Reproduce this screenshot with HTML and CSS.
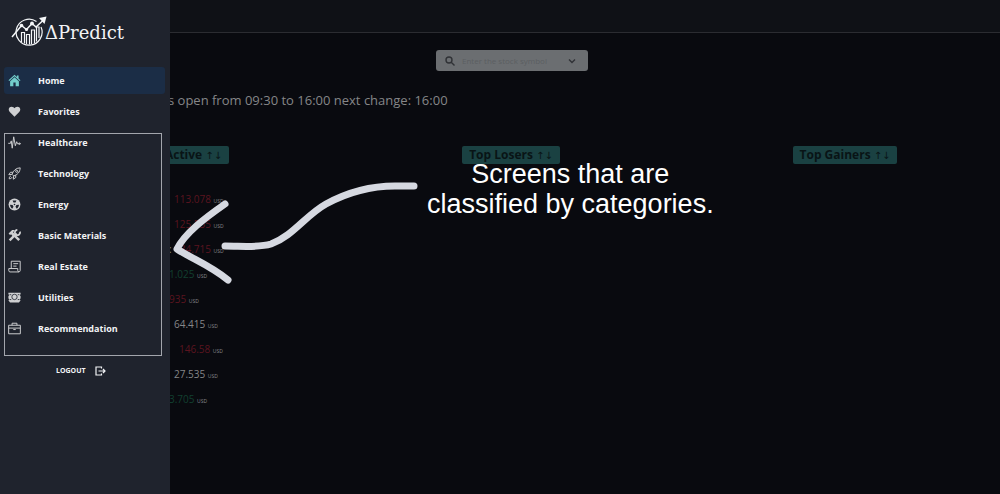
FILE: index.html
```html
<!DOCTYPE html>
<html lang="en">
<head>
<meta charset="utf-8">
<meta name="viewport" content="width=device-width, initial-scale=1">
<title>ΔPredict</title>
<link rel="stylesheet" href="styles.css">
</head>
<body>
<div class="app">
  <aside class="drawer">
    <div class="brand">
      <svg class="brand-mark" viewBox="0 0 36 30" fill="none" stroke="#f4f6f8" aria-hidden="true">
        <path d="M25.500 5.500A13 13 0 1 0 30 11" stroke-width="1.200"/>
        <path d="M10.500 26V16.500h3V27.500M15.500 28V18.500h3V28.500M20.500 28V14h3V27M25.500 25.500V11h2.500V22" stroke-width="1.200"/>
        <path d="M1 21L10.500 9.500 15.500 13.500 21 7.500 25 11 33 3.500" stroke-width="1.500"/>
        <path d="M28 2L35.500 .5 33.500 8z" fill="#f4f6f8" stroke="none"/>
        <g fill="#f4f6f8" stroke="none"><circle cx="10.500" cy="9.500" r="1.800"/><circle cx="15.500" cy="13.500" r="1.600"/><circle cx="21" cy="7.500" r="1.900"/></g>
      </svg>
      <span class="brand-name">ΔPredict</span>
    </div>
    <nav class="nav" aria-label="Screens">
      <a class="nav-link active" href="#home">
        <svg class="icon" viewBox="0 0 16 16" fill="currentColor" aria-hidden="true"><path d="M8 .8L.6 7.600l1 1.100L8 2.900l6.400 5.800 1-1.100-2.400-2.200V1.800h-2v1.800zM8 4L2.600 8.900V15h4v-4.500h2.800V15h4V8.900z"/></svg>Home</a>
      <a class="nav-link" href="#favorites">
        <svg class="icon" viewBox="0 0 16 16" fill="currentColor" aria-hidden="true"><path d="M8 14.500L2.200 8.700C-.2 6.200.8 2 4.500 2 6.200 2 7.400 2.900 8 4c.6-1.100 1.800-2 3.500-2 3.700 0 4.700 4.200 2.300 6.700z"/></svg>Favorites</a>
      <a class="nav-link" href="#healthcare">
        <svg class="icon" viewBox="0 0 16 16" fill="none" stroke="currentColor" stroke-width="1.200" stroke-linejoin="round" stroke-linecap="round" aria-hidden="true"><path d="M.8 9h2.200L4 6 5.200 15 7 1l2 11L10.700 7l1 2.500h1"/><circle cx="14" cy="9.500" r=".9"/></svg>Healthcare</a>
      <a class="nav-link" href="#technology">
        <svg class="icon" viewBox="0 0 16 16" fill="none" stroke="currentColor" stroke-width="1.200" stroke-linejoin="round" aria-hidden="true"><path d="M5 9C6.500 4.500 9.500 1.300 15 1c-.2 5.500-3.500 8.500-8 10zM6 6.500H3L1 9.500l4-.5M9.500 10v3l-3 2 .5-4M3.500 11C2 11.500 1.500 13 1.500 14.500 3 14.500 4.500 14 5 12.500"/><circle cx="10.700" cy="5.300" r="1.300"/></svg>Technology</a>
      <a class="nav-link" href="#energy">
        <svg class="icon" viewBox="0 0 16 16" aria-hidden="true"><circle cx="8" cy="8" r="7.300" fill="currentColor"/><g fill="#1f232d"><path d="M5.600 3h4.800L9.200 5.600H6.800zM2.500 8.300l3.100.200 1.200 2.200-1.600 2.400C3.600 12.200 2.600 10.500 2.500 8.300zM13.500 8.300l-3.100.200-1.200 2.200 1.600 2.400c1.600-.9 2.600-2.600 2.700-4.800z"/><circle cx="8" cy="8" r="1"/></g></svg>Energy</a>
      <a class="nav-link" href="#materials">
        <svg class="icon" viewBox="0 0 16 16" fill="none" stroke="currentColor" aria-hidden="true"><path d="M6.500 6.500l7.300 7.300" stroke-width="3"/><path d="M2 14L10.500 5.500" stroke-width="3"/><path d="M14.600 3.200A3.200 3.200 0 1 1 11.500 1.200" stroke-width="2.200"/><path d="M.7 5.500L5 1.200h3.500L6.300 4l2 2L5.500 8.500 3.800 6.500 2.500 7.500z" fill="currentColor" stroke="none"/></svg>Basic Materials</a>
      <a class="nav-link" href="#real-estate">
        <svg class="icon" viewBox="0 0 16 16" fill="none" stroke="currentColor" stroke-width="1.200" stroke-linejoin="round" aria-hidden="true"><path d="M4 10.500V1.500h11V13c0 2-3 2-3 0v-2.500H1V13c0 1 .6 1.700 1.500 1.700h11M6.500 4.500h6M6.500 7.500h4"/></svg>Real Estate</a>
      <a class="nav-link" href="#utilities">
        <svg class="icon" viewBox="0 0 16 16" aria-hidden="true"><path d="M.5 2h15v2l-1 1 1 1.500v2.500l-1 1.500 1 1L13.500 14h-11L.5 11.500l1-1-1-1.500V6.500L1.500 5l-1-1z" fill="currentColor"/><circle cx="8" cy="7.300" r="3.300" fill="none" stroke="#1f232d" stroke-width="1"/><path d="M2 4.500h2M12 4.500h2M2 10.500h2M12 10.500h2" stroke="#1f232d"/></svg>Utilities</a>
      <a class="nav-link" href="#recommendation">
        <svg class="icon" viewBox="0 0 16 16" fill="none" stroke="currentColor" stroke-width="1.200" stroke-linejoin="round" aria-hidden="true"><path d="M.8 4h14.400v10.500H.8zM5 4V1.500h6V4M.8 7.500h14.400M6.500 9.300h3"/></svg>Recommendation</a>
    </nav>
    <button class="logout" type="button">LOGOUT
      <svg class="logout-icon" viewBox="0 0 11 10" fill="none" stroke="currentColor" stroke-width="1.200" aria-hidden="true"><path d="M6.500 2.500V1H1v8h5.500V7.500M3.500 5H10M8 3l2 2-2 2"/></svg>
    </button>
    <div class="highlight"></div>
  </aside>

  <main class="page">
    <header class="topbar"></header>
    <div class="content">
      <label class="search">
        <svg class="search-icon" viewBox="0 0 10 10" fill="none" stroke="currentColor" stroke-width="1.400" aria-hidden="true"><circle cx="4" cy="4" r="3"/><path d="M6.200 6.200L9.500 9.500"/></svg>
        <input class="search-input" type="text" aria-label="Stock symbol" placeholder="Enter the stock symbol">
        <svg class="search-chevron" viewBox="0 0 8 6" fill="none" stroke="currentColor" stroke-width="1.400" aria-hidden="true"><path d="M1 1.500l3 3 3-3"/></svg>
      </label>
      <p class="hours">s open from 09:30 to 16:00 next change: 16:00</p>
    </div>
    <div class="boards">
      <section class="board">
        <button class="board-title" type="button">Most Active <span class="sort">↑↓</span></button>
        <ul class="quotes">
          <li class="quote down"><span class="lead"></span>113.078 <small>USD</small></li>
          <li class="quote down"><span class="lead"></span>125.535 <small>USD</small></li>
          <li class="quote down"><span class="lead">:</span>134.715 <small>USD</small></li>
          <li class="quote up">1.025 <small>USD</small></li>
          <li class="quote down">935 <small>USD</small></li>
          <li class="quote"><span class="lead"></span>64.415 <small>USD</small></li>
          <li class="quote down"><span class="lead wide"></span>146.58 <small>USD</small></li>
          <li class="quote"><span class="lead"></span>27.535 <small>USD</small></li>
          <li class="quote up">3.705 <small>USD</small></li>
        </ul>
      </section>
      <section class="board"><button class="board-title" type="button">Top Losers <span class="sort">↑↓</span></button></section>
      <section class="board"><button class="board-title" type="button">Top Gainers <span class="sort">↑↓</span></button></section>
    </div>
  </main>

  <svg class="arrow" viewBox="0 0 250 110" fill="none" stroke="#d6d9e1" stroke-width="7" stroke-linecap="round" stroke-linejoin="round" aria-hidden="true">
    <path d="M55 24C35 38 15 53 7 69C22 79 38 84 58 100"/>
    <path d="M55 66C72 66 88 68 101 64C123 56 136 35 156 24C178 12 203 6 225 6H244"/>
  </svg>
  <p class="callout">Screens that are<br>classified by categories.</p>
</div>
</body>
</html>
```

FILE: styles.css
```css
* {
  box-sizing: border-box;
}

body {
  margin: 0;
  background: #090a0f;
  color: #858688;
  font-family: "Open Sans", "Noto Sans", sans-serif;
}

button {
  border: 0;
  font-family: inherit;
}

.app {
  position: relative;
  min-height: 100vh;
  overflow: hidden;
}

/* Navigation drawer, lies over the page */
.drawer {
  position: absolute;
  z-index: 2;
  top: 0;
  bottom: 0;
  left: 0;
  width: 170px;
  padding: 16px 5px 0 4px;
  background: #1f232d;
  color: #f2f3f5;
}

.brand {
  display: flex;
  align-items: center;
  height: 30px;
  padding-left: 7px;
}

.brand-mark {
  width: 36px;
  height: 30px;
  flex: none;
}

.brand-name {
  margin-left: -2px;
  padding-top: 4px;
  font: 18px/30px "DejaVu Serif", serif;
}

.nav {
  display: flex;
  flex-direction: column;
  gap: 4px;
  margin-top: 21px;
}

.nav-link {
  display: flex;
  align-items: center;
  gap: 17px;
  height: 27px;
  padding-left: 4px;
  border-radius: 3px;
  color: inherit;
  font-size: 9px;
  font-weight: 700;
  text-decoration: none;
}

.nav-link.active {
  background: #1b2d46;
}

.icon {
  width: 13px;
  height: 13px;
  color: #cfd0d2;
}

.active .icon {
  color: #72cdcb;
}

.logout {
  display: flex;
  align-items: center;
  gap: 9px;
  margin: 23px 0 0 52px;
  padding: 0;
  background: none;
  color: inherit;
  font-size: 7px;
  font-weight: 700;
  line-height: 12px;
}

.logout-icon {
  width: 11px;
  height: 10px;
}

.highlight {
  position: absolute;
  top: 133px;
  left: 4px;
  width: 158px;
  height: 223px;
  border: 1px solid #a3a6ad;
  pointer-events: none;
}

/* Dimmed page */
.topbar {
  height: 33px;
  border-bottom: 1px solid #2b2c31;
  background: #0f1116;
}

.content {
  padding: 17px 0 0 24px;
}

.search {
  display: flex;
  align-items: center;
  width: 152px;
  height: 21px;
  margin: 0 auto;
  padding: 0 12px 0 9px;
  border-radius: 3px;
  background: #6b6e71;
  color: #303236;
}

.search-icon {
  width: 10px;
  height: 10px;
  flex: none;
}

.search-input {
  flex: 1;
  min-width: 0;
  padding: 0 7px;
  border: 0;
  outline: 0;
  background: none;
  color: inherit;
  font: 8px "Open Sans", sans-serif;
}

.search-input::placeholder {
  color: #5b5e61;
  opacity: 1;
}

.search-chevron {
  width: 8px;
  height: 6px;
  flex: none;
}

.hours {
  margin: 20px 0 0 144px;
  font-size: 13px;
  line-height: 18px;
}

.boards {
  display: grid;
  grid-template-columns: repeat(3, 1fr);
  margin: 37px -12px 0 10px;
}

.board {
  display: flex;
  flex-direction: column;
  align-items: center;
}

.board-title {
  height: 18px;
  padding: 0 7px;
  border-radius: 2px;
  background: #1a4142;
  color: #091416;
  font-size: 12px;
  font-weight: 700;
  line-height: 18px;
}

.sort {
  font-family: "DejaVu Sans", sans-serif;
  font-size: 10px;
  font-weight: 400;
}

.quotes {
  align-self: stretch;
  margin: 23px 0 0;
  padding: 0 0 0 159px;
  list-style: none;
}

.quote {
  display: flex;
  align-items: baseline;
  height: 25px;
  font-size: 10px;
  line-height: 25px;
  white-space: pre;
}

.quote small {
  color: #85868a;
  font-size: 5px;
}

.lead {
  width: 5px;
  color: #858688;
}

.lead.wide {
  width: 10px;
}

.down {
  color: #5b141f;
}

.up {
  color: #12402f;
}

/* Annotations over the page */
.arrow {
  position: absolute;
  z-index: 3;
  top: 180px;
  left: 170px;
  width: 250px;
  height: 110px;
  pointer-events: none;
}

.callout {
  position: absolute;
  z-index: 3;
  top: 159px;
  left: 427px;
  margin: 0;
  color: #fff;
  font: 27px/30px "Liberation Sans", Arial, sans-serif;
  text-align: center;
  white-space: nowrap;
}
```
